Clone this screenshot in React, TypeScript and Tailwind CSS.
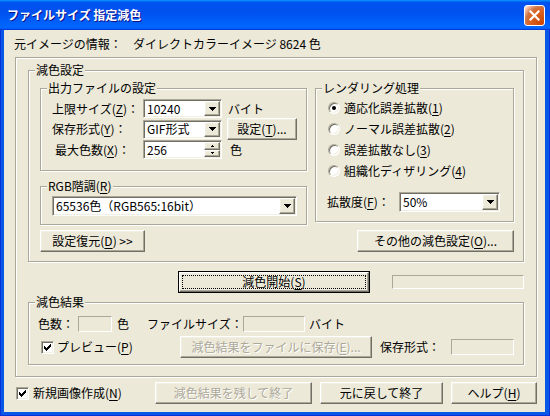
import React from "react";

const FONT = "font-['MS_UI_Gothic','Noto_Sans_CJK_JP','Noto_Sans',sans-serif]";
const SUNKEN =
  "bg-white border border-t-[#aca899] border-l-[#aca899] border-b-white border-r-white shadow-[inset_1px_1px_0_#716f64,inset_-1px_-1px_0_#f1efe2]";
const RAISED =
  "bg-[#ece9d8] border border-t-white border-l-white border-b-[#716f64] border-r-[#716f64] shadow-[inset_-1px_-1px_0_#aca899,inset_1px_1px_0_#f1efe2]";
const STATIC = "border border-t-[#aca899] border-l-[#aca899] border-b-white border-r-white";
const ETCHED = "border border-[#aca899] shadow-[inset_1px_1px_0_#fff,1px_1px_0_#fff]";
const DIS = "text-[#aca899] [text-shadow:1px_1px_0_#fff]";

function U({ c }: { c: string }) {
  return <span className="underline underline-offset-[2px]">{c}</span>;
}

function Group({
  label,
  className,
  children,
}: {
  label: React.ReactNode;
  className: string;
  children?: React.ReactNode;
}) {
  return (
    <div className={`${ETCHED} flex flex-col ${className}`}>
      <div className="-mt-[8px] ml-[6px] self-start px-[1px] bg-[#ece9d8] h-[14px] leading-[14px] whitespace-nowrap">
        {label}
      </div>
      {children}
    </div>
  );
}

function DownTri() {
  return (
    <svg width="7" height="4" viewBox="0 0 7 4" shapeRendering="crispEdges">
      <rect x="0" y="0" width="7" height="1" fill="#000" />
      <rect x="1" y="1" width="5" height="1" fill="#000" />
      <rect x="2" y="2" width="3" height="1" fill="#000" />
      <rect x="3" y="3" width="1" height="1" fill="#000" />
    </svg>
  );
}

function Combo({ className, text }: { className: string; text: string }) {
  return (
    <div className={`${SUNKEN} p-[1px] flex ${className}`}>
      <div className="flex-1 flex items-center pl-[2px] whitespace-nowrap overflow-hidden">{text}</div>
      <div className={`${RAISED} w-[16px] flex items-center justify-center`}>
        <DownTri />
      </div>
    </div>
  );
}

function Spin({ className, text }: { className: string; text: string }) {
  return (
    <div className={`${SUNKEN} p-[1px] flex ${className}`}>
      <div className="flex-1 flex items-center pl-[2px]">{text}</div>
      <div className="w-[16px] flex flex-col">
        <div className={`${RAISED} flex-1 flex items-center justify-center`}>
          <svg width="3" height="2" viewBox="0 0 3 2" shapeRendering="crispEdges">
            <rect x="1" y="0" width="1" height="1" fill="#000" />
            <rect x="0" y="1" width="3" height="1" fill="#000" />
          </svg>
        </div>
        <div className={`${RAISED} flex-1 flex items-center justify-center`}>
          <svg width="3" height="2" viewBox="0 0 3 2" shapeRendering="crispEdges">
            <rect x="0" y="0" width="3" height="1" fill="#000" />
            <rect x="1" y="1" width="1" height="1" fill="#000" />
          </svg>
        </div>
      </div>
    </div>
  );
}

function Btn({
  className,
  children,
  disabled,
}: {
  className: string;
  children: React.ReactNode;
  disabled?: boolean;
}) {
  return (
    <div
      className={`${RAISED} flex items-center justify-center whitespace-nowrap ${disabled ? DIS : ""} ${className}`}
    >
      {children}
    </div>
  );
}

function Radio({ checked }: { checked?: boolean }) {
  return (
    <div className="w-[12px] h-[12px] rounded-full bg-white border border-t-[#aca899] border-l-[#aca899] border-r-white border-b-white shadow-[inset_1px_1px_0_#716f64,inset_-1px_-1px_0_#f1efe2] flex items-center justify-center shrink-0">
      {checked && <div className="w-[4px] h-[4px] rounded-full bg-black" />}
    </div>
  );
}

function Check() {
  const px: [number, number][] = [
    [6, 0],
    [5, 1], [6, 1],
    [0, 2], [4, 2], [5, 2], [6, 2],
    [0, 3], [1, 3], [3, 3], [4, 3], [5, 3],
    [0, 4], [1, 4], [2, 4], [3, 4], [4, 4],
    [1, 5], [2, 5], [3, 5],
    [2, 6],
  ];
  return (
    <div className={`w-[13px] h-[13px] ${SUNKEN} flex items-center justify-center shrink-0`}>
      <svg width="7" height="7" viewBox="0 0 7 7" shapeRendering="crispEdges">
        {px.map(([x, y], i) => (
          <rect key={i} x={x} y={y} width="1" height="1" fill="#000" />
        ))}
      </svg>
    </div>
  );
}

export default function App() {
  return (
    <div
      className={`w-[550px] h-[416px] flex flex-col ${FONT} text-[12px] leading-[14px] text-black select-none overflow-hidden`}
    >
      {/* Title bar */}
      <div className="h-[30px] shrink-0 flex items-center pl-[7px] pr-[5px] bg-[linear-gradient(180deg,#0997ff,#0053ee_8%,#0050ee_40%,#06f_88%,#06f_93%,#005bff_95%,#003dd7_96%,#003dd7)]">
        <div className="flex-1 text-white font-bold text-[12px] [text-shadow:1px_1px_0_#0f1089] whitespace-nowrap">
          ファイルサイズ 指定減色
        </div>
        <div className="w-[21px] h-[21px] rounded-[3px] border border-white bg-[radial-gradient(circle_at_90%_90%,#cc4600_0%,#dc6527_55%,#cd7546_68%,#ffccb2_90%,#fff_100%)] flex items-center justify-center">
          <svg width="11" height="11" viewBox="0 0 11 11">
            <path d="M1.5 1.5 L9.5 9.5 M9.5 1.5 L1.5 9.5" stroke="#fff" strokeWidth="2.2" strokeLinecap="square" />
          </svg>
        </div>
      </div>

      {/* Window frame */}
      <div className="flex-1 flex pl-[4px] pr-[5px] pb-[4px] bg-[#0858e8] shadow-[inset_1px_0_0_#0831d9,inset_-1px_-1px_0_#0831d9]">
        <div className="flex-1 bg-[#ece9d8] flex flex-col">
          {/* info */}
          <div className="mt-[7px] ml-[10px] flex h-[14px] whitespace-nowrap">
            <span className="w-[119px]">元イメージの情報：</span>
            <span>ダイレクトカラーイメージ 8624 色</span>
          </div>

          {/* outer frame */}
          <div className={`mt-[6px] ml-[11px] w-[522px] h-[320px] ${ETCHED} flex flex-col`}>
            {/* 減色設定 */}
            <Group label="減色設定" className="mt-[12px] ml-[12px] w-[496px] h-[192px]">
              <div className="mt-[11px] ml-[11px] flex">
                {/* left column */}
                <div className="w-[267px] flex flex-col">
                  <Group label="出力ファイルの設定" className="h-[83px]">
                    <div className="mt-[4px] ml-[11px] flex items-center h-[19px]">
                      <span className="w-[91px] whitespace-nowrap">
                        上限サイズ(<U c="Z" />)：
                      </span>
                      <Combo className="w-[79px] h-[19px]" text="10240" />
                      <span className="ml-[6px]">バイト</span>
                    </div>
                    <div className="ml-[11px] flex items-center h-[22px]">
                      <span className="w-[91px] whitespace-nowrap">
                        保存形式(<U c="Y" />)：
                      </span>
                      <Combo className="w-[79px] h-[19px]" text="GIF形式" />
                      <Btn className="ml-[5px] w-[70px] h-[22px]">
                        設定(<U c="T" />)...
                      </Btn>
                    </div>
                    <div className="ml-[11px] flex items-center h-[19px]">
                      <span className="w-[91px] pl-[3px] whitespace-nowrap">
                        最大色数(<U c="X" />)：
                      </span>
                      <Spin className="w-[79px] h-[19px]" text="256" />
                      <span className="ml-[8px]">色</span>
                    </div>
                  </Group>
                  <Group
                    label={
                      <>
                        RGB階調(<U c="R" />)
                      </>
                    }
                    className="mt-[15px] h-[39px]"
                  >
                    <Combo className="mt-[3px] ml-[11px] w-[245px] h-[20px]" text="65536色（RGB565:16bit）" />
                  </Group>
                  <Btn className="mt-[5px] w-[105px] h-[22px]">
                    設定復元(<U c="D" />) &gt;&gt;
                  </Btn>
                </div>

                {/* right column */}
                <div className="ml-[8px] w-[199px] flex flex-col">
                  <Group label="レンダリング処理" className="h-[134px]">
                    <div className="mt-[2px] flex flex-col">
                      {[
                        ["適応化誤差拡散", "1", true],
                        ["ノーマル誤差拡散", "2", false],
                        ["誤差拡散なし", "3", false],
                        ["組織化ディザリング", "4", false],
                      ].map(([t, k, c]) => (
                        <div key={k as string} className="ml-[12px] h-[21px] flex items-center whitespace-nowrap">
                          <Radio checked={c as boolean} />
                          <span className="ml-[4px]">
                            {t as string}(<U c={k as string} />)
                          </span>
                        </div>
                      ))}
                    </div>
                    <div className="mt-[11px] ml-[11px] flex items-center h-[20px]">
                      <span className="w-[72px] whitespace-nowrap">
                        拡散度(<U c="F" />)：
                      </span>
                      <Combo className="w-[101px] h-[20px]" text="50%" />
                    </div>
                  </Group>
                  <Btn className="mt-[8px] self-end w-[157px] h-[22px]">
                    その他の減色設定(<U c="O" />)...
                  </Btn>
                </div>
              </div>
            </Group>

            {/* 減色開始 row */}
            <div className="mt-[9px] ml-[162px] flex items-center h-[22px]">
              <div className="w-[192px] h-[22px] border border-black flex">
                <div className={`flex-1 ${RAISED} p-[2px] flex`}>
                  <div className="flex-1 border border-dotted border-black flex items-center justify-center whitespace-nowrap">
                    減色開始(<U c="S" />)
                  </div>
                </div>
              </div>
              <div className={`ml-[22px] w-[132px] h-[14px] ${STATIC}`} />
            </div>

            {/* 減色結果 */}
            <Group label="減色結果" className="mt-[9px] ml-[12px] w-[496px] h-[63px]">
              <div className="mt-[6px] ml-[9px] flex items-center h-[18px] whitespace-nowrap">
                <span className="w-[40px]">色数：</span>
                <div className={`w-[34px] h-[16px] ${STATIC}`} />
                <span className="ml-[5px] w-[12px]">色</span>
                <span className="ml-[18px] w-[96px]">ファイルサイズ：</span>
                <div className={`w-[62px] h-[16px] ${STATIC}`} />
                <span className="ml-[4px]">バイト</span>
              </div>
              <div className="mt-[3px] ml-[12px] flex items-center h-[22px] whitespace-nowrap">
                <div className="w-[139px] flex items-center">
                  <Check />
                  <span className="ml-[3px]">
                    プレビュー(<U c="P" />)
                  </span>
                </div>
                <Btn disabled className="w-[192px] h-[22px]">
                  減色結果をファイルに保存(<U c="E" />)...
                </Btn>
                <span className="ml-[8px] w-[71px]">保存形式：</span>
                <div className={`w-[63px] h-[16px] ${STATIC}`} />
              </div>
            </Group>
          </div>

          {/* bottom row */}
          <div className="mt-[5px] ml-[12px] flex items-center h-[22px] whitespace-nowrap">
            <div className="w-[139px] flex items-center">
              <Check />
              <span className="ml-[4px]">
                新規画像作成(<U c="N" />)
              </span>
            </div>
            <Btn disabled className="w-[157px] h-[22px]">
              減色結果を残して終了
            </Btn>
            <Btn className="ml-[8px] w-[123px] h-[22px]">元に戻して終了</Btn>
            <Btn className="ml-[8px] w-[86px] h-[22px]">
              ヘルプ(<U c="H" />)
            </Btn>
          </div>
        </div>
      </div>
    </div>
  );
}
